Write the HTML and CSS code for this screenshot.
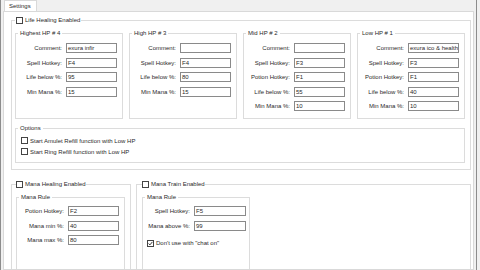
FILE: index.html
```html
<!DOCTYPE html>
<html>
<head>
<meta charset="utf-8">
<title>Settings</title>
<link rel="stylesheet" href="styles.css">
</head>
<body>
<div class="window">
  <div class="edge-left"></div>
  <div class="main">
    <div class="tabs"><div class="tab">Settings</div></div>
    <div class="page">
      <fieldset class="life">
        <legend><span class="cb"></span>Life Healing Enabled</legend>
        <div class="hp-row">
          <fieldset class="box">
            <legend>Highest HP # 4</legend>
            <div class="form">
              <label>Comment:</label><div class="tb">exura infir</div>
              <label>Spell Hotkey:</label><div class="tb">F4</div>
              <label>Life below %:</label><div class="tb">95</div>
              <label>Min Mana %:</label><div class="tb">15</div>
            </div>
          </fieldset>
          <fieldset class="box">
            <legend>High HP # 3</legend>
            <div class="form">
              <label>Comment:</label><div class="tb"></div>
              <label>Spell Hotkey:</label><div class="tb">F4</div>
              <label>Life below %:</label><div class="tb">80</div>
              <label>Min Mana %:</label><div class="tb">15</div>
            </div>
          </fieldset>
          <fieldset class="box">
            <legend>Mid HP # 2</legend>
            <div class="form">
              <label>Comment:</label><div class="tb"></div>
              <label>Spell Hotkey:</label><div class="tb">F3</div>
              <label>Potion Hotkey:</label><div class="tb">F1</div>
              <label>Life below %:</label><div class="tb">55</div>
              <label>Min Mana %:</label><div class="tb">10</div>
            </div>
          </fieldset>
          <fieldset class="box">
            <legend>Low HP # 1</legend>
            <div class="form">
              <label>Comment:</label><div class="tb">exura ico &amp; health</div>
              <label>Spell Hotkey:</label><div class="tb">F3</div>
              <label>Potion Hotkey:</label><div class="tb">F1</div>
              <label>Life below %:</label><div class="tb">40</div>
              <label>Min Mana %:</label><div class="tb">10</div>
            </div>
          </fieldset>
        </div>
        <fieldset class="options">
          <legend>Options</legend>
          <div class="chk-row"><span class="cb"></span>Start Amulet Refill function with Low HP</div>
          <div class="chk-row"><span class="cb"></span>Start Ring Refill function with Low HP</div>
        </fieldset>
      </fieldset>
      <div class="bottom">
        <fieldset class="mana">
          <legend><span class="cb"></span>Mana Healing Enabled</legend>
          <fieldset class="rule">
            <legend>Mana Rule</legend>
            <div class="form">
              <label>Potion Hotkey:</label><div class="tb">F2</div>
              <label>Mana min %:</label><div class="tb">40</div>
              <label>Mana max %:</label><div class="tb">80</div>
            </div>
          </fieldset>
        </fieldset>
        <fieldset class="train">
          <legend><span class="cb"></span>Mana Train Enabled</legend>
          <fieldset class="rule rule-train">
            <legend>Mana Rule</legend>
            <div class="form form-train">
              <label>Spell Hotkey:</label><div class="tb">F5</div>
              <label>Mana above %:</label><div class="tb">99</div>
            </div>
            <div class="chk-row chk-train"><span class="cb checked"><svg viewBox="0 0 5 5"><path d="M0.6 2.5 L1.9 3.9 L4.4 0.9"/></svg></span>Don't use with "chat on"</div>
          </fieldset>
        </fieldset>
      </div>
    </div>
  </div>
  <div class="edge-right"></div>
</div>
</body>
</html>
```
FILE: styles.css
```css
* { box-sizing: border-box; }
html, body { margin: 0; padding: 0; }
body {
  width: 480px;
  height: 270px;
  overflow: hidden;
  background: #f0f0f0;
  font-family: "Liberation Sans", Arial, sans-serif;
  font-size: 6px;
  color: #2a2a2a;
}
.window { display: flex; height: 270px; }
.edge-left { width: 1px; background: #8c8c8c; }
.main {
  width: 473px;
  padding-left: 2px;
  display: flex;
  flex-direction: column;
  overflow: hidden;
}
.edge-right { width: 1px; background: #8c8c8c; margin-left: 2px; }
.tabs { height: 11px; display: flex; flex-shrink: 0; }
.tab {
  margin-left: 1px;
  height: 11px;
  padding: 0 5px 0 4px;
  border: 1px solid #d9d9d9;
  border-bottom: none;
  background: #fff;
  line-height: 10px;
}
.page {
  flex: 1;
  background: #fff;
  border: 1px solid #d9d9d9;
  padding: 4px 0 0 7px;
  overflow: hidden;
}
fieldset {
  margin: 0;
  padding: 0;
  border: 1px solid #dcdcdc;
  min-width: 0;
}
legend {
  padding: 0;
  height: 8px;
  line-height: 8px;
  white-space: nowrap;
}
.cb {
  display: inline-block;
  width: 7px;
  height: 7px;
  border: 1px solid #444;
  background: #fff;
  vertical-align: top;
  margin-top: 1px;
  margin-right: 2px;
  flex-shrink: 0;
}
.cb svg { display: block; width: 5px; height: 5px; }
.cb svg path { fill: none; stroke: #222; stroke-width: 0.9; }
.life { width: 460px; padding: 0 5px 6px 3px; }
.life > legend { padding: 0 1px; }
.hp-row {
  display: grid;
  grid-template-columns: repeat(4, 1fr);
  gap: 6px;
  margin-top: 5px;
}
.box { padding: 6px 5px 7px 2px; }
.box > legend { padding: 0 2px; }
.form {
  display: grid;
  grid-template-columns: 1fr 51px;
  column-gap: 4px;
  row-gap: 4.5px;
  align-items: center;
}
.form label { text-align: right; white-space: nowrap; line-height: 8px; }
.tb {
  height: 10px;
  border: 1px solid #8a8a8a;
  background: #fff;
  padding-left: 1px;
  line-height: 8px;
  overflow: hidden;
  white-space: nowrap;
}
.options { margin-top: 5px; padding: 3px 5px 5px 2px; }
.options > legend { padding: 0 2px; }
.chk-row {
  height: 11px;
  display: flex;
  align-items: center;
  padding-left: 3px;
  white-space: nowrap;
}
.chk-row .cb { margin-top: 0; }
.bottom { display: flex; gap: 5px; margin-top: 10px; }
.mana { width: 120px; padding: 0 5px 0 4px; }
.train { width: 335px; padding: 0 5px 0 5px; }
.rule {
  width: 109px;
  margin-top: 5px;
  padding: 5px 5px 60px 2px;
}
.rule > legend { padding: 0 2px; }
.rule-train { width: 108px; padding-right: 3px; }
.form-train { grid-template-columns: 1fr 52px; }
.chk-train { margin-top: 7px; padding-left: 2px; }
```
